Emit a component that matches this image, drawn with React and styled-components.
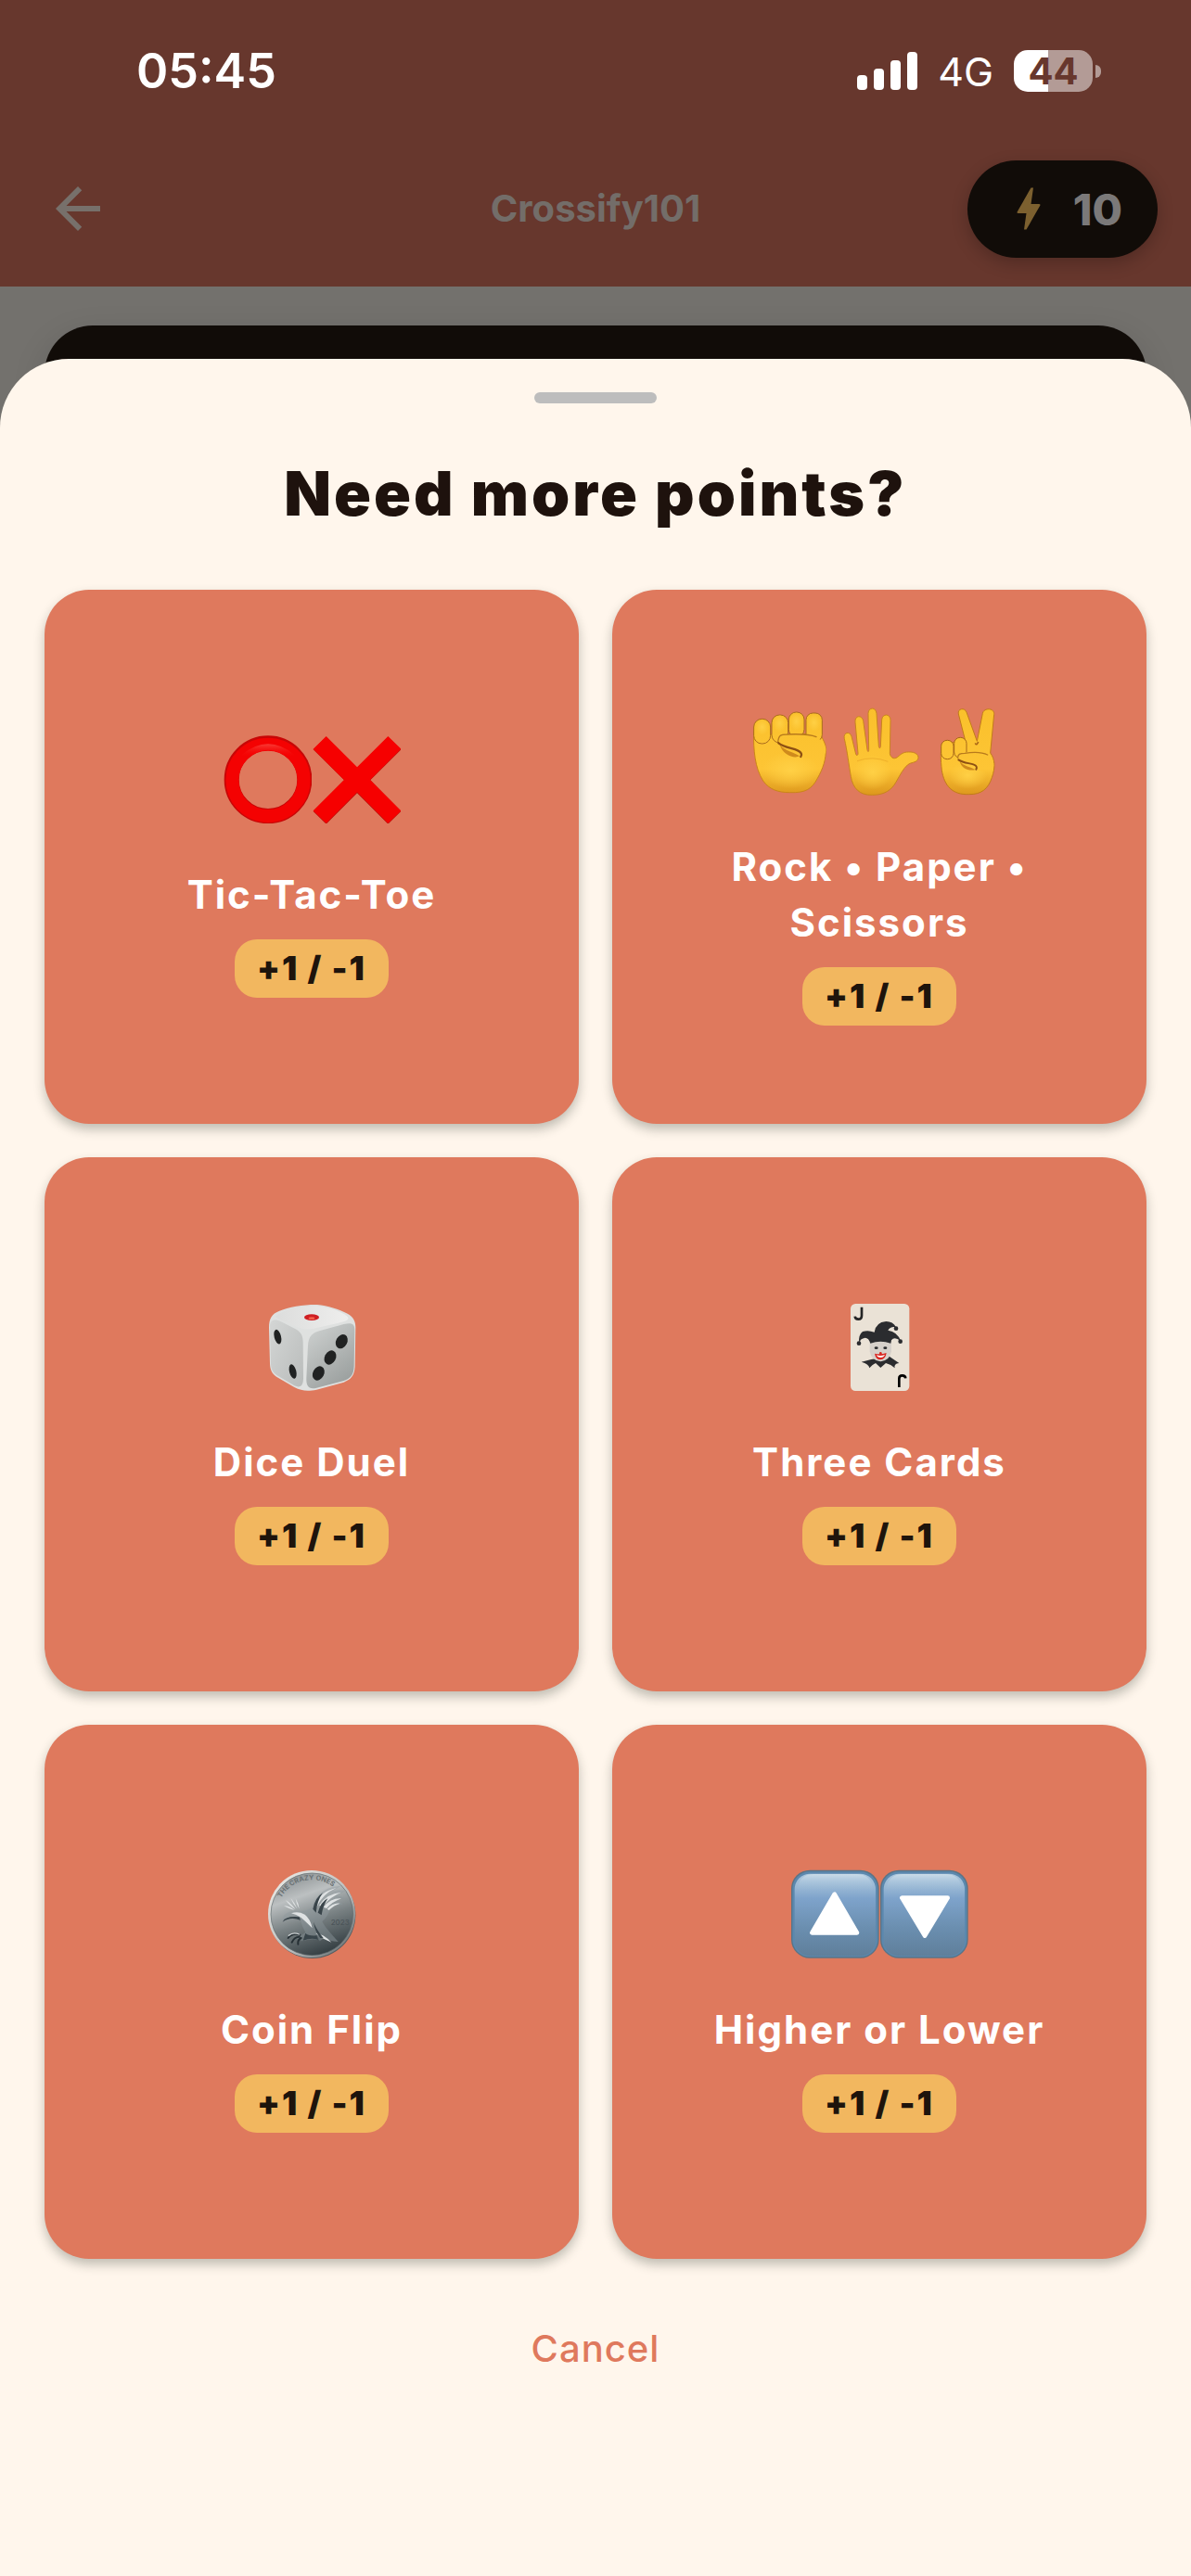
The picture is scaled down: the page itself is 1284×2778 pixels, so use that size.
import React from "react";
import styled, { createGlobalStyle } from "styled-components";
import { MdArrowBack, MdBolt } from "react-icons/md";

const GlobalStyle = createGlobalStyle`
  *, *::before, *::after { box-sizing: border-box; }
  body {
    margin: 0;
    background: #73716d;
    font-family: Inter, Roboto, "Liberation Sans", sans-serif;
    -webkit-font-smoothing: antialiased;
  }
  button { font-family: inherit; border: 0; padding: 0; margin: 0; cursor: pointer; }
`;

const Screen = styled.div`
  min-height: 100vh;
  display: flex;
  flex-direction: column;
  background: #73716d;
`;

const Header = styled.header`
  background: #67372d;
`;

const StatusBar = styled.div`
  height: 141px;
  padding: 12px 97px 0 147px;
  display: flex;
  align-items: center;
  justify-content: space-between;
  color: #ffffff;
`;

const Clock = styled.time`
  font-size: 52px;
  line-height: 60px;
  font-weight: 600;
`;

const StatusIcons = styled.div`
  display: flex;
  align-items: center;
  gap: 22px;
`;

const Network = styled.span`
  font-size: 43px;
  line-height: 48px;
  font-weight: 400;
`;

const Battery = styled.div`
  display: flex;
  align-items: center;
  gap: 3px;
`;

const BatteryBody = styled.span`
  width: 85px;
  height: 45px;
  border-radius: 15px;
  display: grid;
  place-items: center;
  background: linear-gradient(90deg, #ffffff 44%, #b39b96 44%);
  color: #67372d;
  font-size: 40px;
  line-height: 45px;
  font-weight: 700;
`;

const BatteryTip = styled.span`
  width: 6px;
  height: 14px;
  border-radius: 0 6px 6px 0;
  background: #b39b96;
`;

const AppBar = styled.div`
  height: 168px;
  padding: 0 36px;
  display: grid;
  grid-template-columns: 1fr auto 1fr;
  align-items: center;
`;

const BackButton = styled.button`
  width: 84px;
  height: 72px;
  padding-left: 12px;
  background: none;
  color: #77706b;
  svg { display: block; width: 72px; height: 72px; }
`;

const AppTitle = styled.h1`
  margin: 0;
  font-size: 40px;
  line-height: 48px;
  font-weight: 700;
  color: #736d69;
`;

const Points = styled.button`
  justify-self: end;
  height: 105px;
  padding: 0 38px 0 36px;
  border-radius: 53px;
  display: flex;
  align-items: center;
  gap: 18px;
  background: #110c08;
  color: #7b7979;
  font-size: 47px;
  font-weight: 800;
  box-shadow: 0 6px 18px rgba(0, 0, 0, 0.22);
  svg { width: 60px; height: 60px; color: #7c602f; }
`;

const Backdrop = styled.div`
  padding: 42px 48px 0;
`;

const HiddenCard = styled.div`
  height: 96px;
  border-radius: 52px 52px 0 0;
  background: #110c08;
  box-shadow: 0 12px 36px rgba(0, 0, 0, 0.14);
`;

const Sheet = styled.main`
  position: relative;
  flex: 1;
  margin-top: -60px;
  padding: 36px 48px 174px;
  border-radius: 74px 74px 0 0;
  background: #fff6ec;
  display: flex;
  flex-direction: column;
  align-items: center;
`;

const Handle = styled.span`
  width: 132px;
  height: 12px;
  border-radius: 6px;
  background: #bdbdbd;
`;

const Heading = styled.h2`
  margin: 57px 0 64px;
  font-size: 66px;
  line-height: 80px;
  font-weight: 900;
  letter-spacing: 3px;
  color: #1e120d;
`;

const Grid = styled.div`
  width: 100%;
  display: grid;
  grid-template-columns: repeat(2, minmax(0, 1fr));
  gap: 36px;
`;

const Tile = styled.button`
  aspect-ratio: 1;
  padding: 0 48px;
  border-radius: 48px;
  display: flex;
  flex-direction: column;
  align-items: center;
  justify-content: center;
  background: #df795d;
  box-shadow: 0 6px 12px rgba(30, 40, 30, 0.28);
`;

const Emojis = styled.span`
  height: 134px;
  margin-bottom: 28px;
  display: flex;
  align-items: center;
  svg { display: block; width: 96px; height: 96px; }
`;

const TileName = styled.span`
  font-size: 42px;
  line-height: 60px;
  font-weight: 700;
  letter-spacing: 2px;
  text-align: center;
  color: #ffffff;
`;

const Stake = styled.span`
  height: 63px;
  margin-top: 18px;
  padding: 0 24px;
  border-radius: 24px;
  background: #f2b75f;
  color: #1e140c;
  font-size: 36px;
  line-height: 63px;
  font-weight: 900;
  letter-spacing: 2px;
`;

const Cancel = styled.button`
  height: 144px;
  margin-top: 24px;
  padding: 0 48px;
  background: none;
  color: #df795d;
  font-size: 40px;
  font-weight: 500;
  letter-spacing: 1px;
`;

function Signal() {
  return (
    <svg width="65" height="41" viewBox="0 0 65 41" fill="#fff" aria-hidden="true">
      <rect x="0" y="25" width="11" height="16" rx="4" />
      <rect x="18" y="18" width="11" height="23" rx="4" />
      <rect x="36" y="9" width="11" height="32" rx="4" />
      <rect x="54" y="0" width="11" height="41" rx="4" />
    </svg>
  );
}

function Circle() {
  return (
    <svg viewBox="0 0 288 288" aria-hidden="true">
      <defs>
        <linearGradient id="ringShine" x1="0" y1="0" x2="0" y2="1">
          <stop offset="0" stopColor="#f83a34" />
          <stop offset="1" stopColor="#f50000" stopOpacity="0" />
        </linearGradient>
      </defs>
      <circle cx="147" cy="146" r="118" fill="none" stroke="#c80606" strokeWidth="48" />
      <circle cx="147" cy="148" r="116" fill="none" stroke="#f40202" strokeWidth="42" />
      <path d="M62 66 Q147 -4 232 66 Q220 80 206 70 Q147 30 88 70 Q72 80 62 66Z" fill="url(#ringShine)" />
    </svg>
  );
}

function Cross() {
  return (
    <svg viewBox="0 0 288 288" aria-hidden="true">
      <path d="M47 8 147 108 247 8 289 49 190 148 289 249 247 290 147 190 47 290 5 249 105 148 5 49Z" fill="#b8100a" />
      <path d="M47 6 147 106 247 6 289 47 189 147 289 247 247 287 147 187 47 287 5 247 105 147 5 47Z" fill="#f60000" />
    </svg>
  );
}

function SkinDefs({ id }) {
  return (
    <defs>
      <linearGradient id={id} gradientUnits="userSpaceOnUse" x1="0" y1="0" x2="0" y2="288">
        <stop offset="0" stopColor="#fac02b" />
        <stop offset="0.7" stopColor="#fdc535" />
        <stop offset="1" stopColor="#dc961c" />
      </linearGradient>
      <radialGradient id={`${id}Glow`}>
        <stop offset="0" stopColor="#ffd045" />
        <stop offset="1" stopColor="#ffd045" stopOpacity="0" />
      </radialGradient>
    </defs>
  );
}

function Fist() {
  return (
    <svg viewBox="0 0 288 288" aria-hidden="true">
      <SkinDefs id="fistSkin" />
      <path
        d="M26 80 C24 140 30 200 56 240 C76 268 104 278 142 278 C194 280 214 266 232 232 C250 200 260 170 259 136 C258 118 250 108 246 98 L230 88 L80 90Z"
        fill="url(#fistSkin)" stroke="#cb8518" strokeWidth="3"
      />
      <ellipse cx="145" cy="205" rx="90" ry="60" fill="url(#fistSkinGlow)" />
      <g fill="url(#fistSkin)" stroke="#a96b1c" strokeWidth="3">
        <rect x="139" y="18" width="50" height="80" rx="24" />
        <rect x="195" y="21" width="52" height="92" rx="22" />
        <rect x="84" y="27" width="53" height="90" rx="25" />
        <rect x="26" y="40" width="54" height="80" rx="26" />
      </g>
      <g fill="url(#fistSkinGlow)">
        <ellipse cx="53" cy="66" rx="22" ry="26" />
        <ellipse cx="110" cy="54" rx="22" ry="28" />
        <ellipse cx="164" cy="48" rx="22" ry="28" />
        <ellipse cx="221" cy="52" rx="22" ry="28" />
      </g>
      <path
        d="M118 90 C160 88 196 88 224 98 C250 108 260 126 259 142 C258 174 206 178 178 156 C180 144 168 138 146 134 C118 128 104 118 104 106 C104 96 108 90 118 90Z"
        fill="url(#fistSkin)"
      />
      <path d="M104 116 C106 94 112 90 132 90 C176 88 204 88 228 98" fill="none" stroke="#b87a1c" strokeWidth="4" strokeLinecap="round" />
      <path d="M110 124 C130 146 152 146 174 160 C158 170 120 158 110 124Z" fill="#cf8a1c" />
      <path d="M106 118 C124 132 150 134 168 142 C180 148 183 154 178 162" fill="none" stroke="#8d5013" strokeWidth="7" strokeLinecap="round" />
    </svg>
  );
}

const palmShape =
  "M31 104 C26 84 48 78 54 96 L68 154 C70 160 76 158 75 150 L66 50 C64 28 88 26 92 46 L105 140 C107 148 110 147 110 139 L108 22 C109 1 133 1 135 22 L142 128 C143 136 147 136 148 129 L152 42 C154 22 180 22 180 44 L178 152 C180 164 190 172 202 164 C216 152 222 147 238 147 C260 145 276 158 268 172 C262 182 246 180 236 188 C220 202 212 220 198 244 C184 270 160 286 122 286 C78 288 58 262 52 226 C46 192 40 142 31 104Z";

function Palm() {
  return (
    <svg viewBox="0 0 288 288" aria-hidden="true">
      <SkinDefs id="palmSkin" />
      <path d={palmShape} fill="url(#palmSkin)" stroke="#c9861b" strokeWidth="3" />
      <ellipse cx="122" cy="212" rx="62" ry="56" fill="url(#palmSkinGlow)" />
      <path d="M72 176 Q122 158 172 178" fill="none" stroke="#efb02a" strokeWidth="3" />
    </svg>
  );
}

function Peace() {
  return (
    <svg viewBox="0 0 288 288" aria-hidden="true">
      <SkinDefs id="peaceSkin" />
      <path
        d="M112 24 C108 6 132 2 138 18 L172 112 L190 22 C194 2 230 4 227 26 L215 150 C230 170 232 196 220 230 C208 266 186 285 145 284 C92 286 66 256 58 206 C54 170 54 150 58 122 L134 110Z"
        fill="url(#peaceSkin)" stroke="#c27c18" strokeWidth="3"
      />
      <ellipse cx="142" cy="222" rx="62" ry="44" fill="url(#peaceSkinGlow)" />
      <path d="M166 118 Q171 128 176 114" fill="none" stroke="#a96617" strokeWidth="5" />
      <g fill="url(#peaceSkin)" stroke="#a66618" strokeWidth="3">
        <rect x="98" y="100" width="40" height="66" rx="19" />
        <rect x="56" y="109" width="40" height="61" rx="19" />
      </g>
      <path
        d="M116 150 C146 146 180 144 202 154 C220 164 226 176 226 192 C218 214 184 212 168 202 C170 190 162 186 146 184 C126 182 110 176 110 164 C110 156 112 152 116 150Z"
        fill="url(#peaceSkin)"
      />
      <path d="M110 166 C110 154 116 151 132 151 C164 146 190 148 206 156" fill="none" stroke="#b87a1c" strokeWidth="4" strokeLinecap="round" />
      <path d="M116 176 C130 194 146 192 166 204 C148 210 120 200 116 176Z" fill="#cf8a1c" />
      <path d="M112 172 C130 184 148 182 162 188 C172 192 172 198 169 203" fill="none" stroke="#8d5013" strokeWidth="6" strokeLinecap="round" />
    </svg>
  );
}

function Die() {
  return (
    <svg viewBox="0 0 288 288" aria-hidden="true">
      <defs>
        <linearGradient id="dieLeft" x1="0" y1="0" x2="1" y2="1">
          <stop offset="0" stopColor="#d4d6d5" />
          <stop offset="1" stopColor="#b9bcbb" />
        </linearGradient>
        <linearGradient id="dieRight" x1="0.2" y1="0" x2="0.8" y2="1">
          <stop offset="0" stopColor="#cccfce" />
          <stop offset="1" stopColor="#989d9c" />
        </linearGradient>
        <linearGradient id="dieTop" x1="0" y1="0" x2="1" y2="0">
          <stop offset="0" stopColor="#dcdddc" />
          <stop offset="1" stopColor="#eeeeed" />
        </linearGradient>
      </defs>
      <path
        d="M38 30 C70 16 124 8 162 9 C196 12 232 24 260 38 C278 48 286 62 286 82 L284 210 C282 238 272 250 248 260 L160 284 C130 290 112 288 88 276 L30 242 C14 230 10 218 9 200 L6 84 C6 54 16 38 38 30Z"
        fill="#dfe1e0"
      />
      <path d="M9 78 C10 58 22 54 42 62 L92 88 C110 98 116 110 116 132 L117 240 C118 272 108 280 88 271 L32 238 C18 229 13 218 12 202Z" fill="url(#dieLeft)" />
      <path d="M132 140 C134 112 146 98 174 92 L248 72 C276 66 284 72 283 94 L281 208 C280 236 270 248 246 256 L160 278 C134 284 126 272 127 246Z" fill="url(#dieRight)" />
      <path d="M28 46 C60 22 124 12 160 13 C196 16 238 30 258 46 C272 60 248 64 224 70 L160 84 C132 92 112 88 90 78 L38 56 Q24 50 28 46Z" fill="url(#dieTop)" />
      <ellipse cx="144" cy="50" rx="24" ry="10" fill="#cf1e22" />
      <ellipse cx="144" cy="53" rx="10" ry="4" fill="#f2604a" />
      <g fill="#202222">
        <ellipse cx="34" cy="113" rx="11" ry="24" transform="rotate(-14 34 113)" />
        <ellipse cx="83" cy="225" rx="11" ry="24" transform="rotate(-14 83 225)" />
        <ellipse cx="241" cy="128" rx="18" ry="24" transform="rotate(28 241 128)" />
        <ellipse cx="204" cy="180" rx="18" ry="24" transform="rotate(28 204 180)" />
        <ellipse cx="166" cy="231" rx="18" ry="24" transform="rotate(28 166 231)" />
      </g>
    </svg>
  );
}

function Joker() {
  return (
    <svg viewBox="0 0 288 288" aria-hidden="true">
      <rect x="51" y="6" width="190" height="282" rx="16" fill="#eae2d6" />
      <g fill="none" stroke="#252526" strokeWidth="8">
        <path d="M87 17 V44 Q87 56 76 56 Q66 56 65 47" />
        <path d="M208 276 V248 Q208 238 218 238 Q228 238 229 247" stroke="#000" />
      </g>
      <path d="M118 186 L86 194 Q110 200 112 214 Q122 202 132 198 L148 213 L165 198 Q182 202 194 214 Q190 200 208 198 L176 176Z" fill="#2b2c2f" />
      <path d="M113 118 H182 L183 160 Q178 190 148 193 Q118 190 113 160Z" fill="#d6d0ca" />
      <path
        d="M78 134 Q76 106 90 96 Q108 90 128 98 Q132 66 166 63 Q188 63 198 82 Q180 78 172 92 Q202 96 213 126 Q192 110 183 124 L181 134 Q148 122 115 134 Q110 116 98 116 Q82 118 78 134Z"
        fill="#2b2c2f"
      />
      <g fill="#2b2c2f">
        <circle cx="78" cy="134" r="7" />
        <circle cx="198" cy="86" r="7" />
        <circle cx="212" cy="128" r="7" />
        <ellipse cx="134" cy="149" rx="6" ry="4" />
        <ellipse cx="163" cy="149" rx="6" ry="4" />
      </g>
      <path d="M129 167 Q148 172 167 165 Q164 186 148 187 Q132 186 129 167Z" fill="#d9241f" />
      <path d="M135 172 Q148 177 162 171 Q158 180 148 180 Q138 180 135 172Z" fill="#fff" />
      <circle cx="148" cy="166" r="4" fill="#d9241f" />
    </svg>
  );
}

function Coin() {
  return (
    <svg viewBox="0 0 288 288" aria-hidden="true">
      <defs>
        <linearGradient id="coinFace" x1="0.2" y1="0" x2="0.55" y2="1">
          <stop offset="0" stopColor="#858b8d" />
          <stop offset="0.3" stopColor="#bcc0c1" />
          <stop offset="0.6" stopColor="#7a8284" />
          <stop offset="1" stopColor="#364044" />
        </linearGradient>
        <linearGradient id="coinRim" x1="0" y1="0" x2="1" y2="1">
          <stop offset="0" stopColor="#f1efea" />
          <stop offset="0.6" stopColor="#b9bcbc" />
          <stop offset="1" stopColor="#545c5f" />
        </linearGradient>
        <linearGradient id="eagle" x1="0" y1="0" x2="0.4" y2="1">
          <stop offset="0" stopColor="#c9cdcf" />
          <stop offset="0.5" stopColor="#929a9d" />
          <stop offset="1" stopColor="#6a7478" />
        </linearGradient>
        <path id="coinArc" d="M45 92 A114 114 0 0 1 238 82" />
      </defs>
      <circle cx="146" cy="148" r="140" fill="#555e61" />
      <circle cx="144" cy="144" r="141" fill="url(#coinRim)" />
      <circle cx="145" cy="145" r="133" fill="url(#coinFace)" stroke="#5e686b" strokeWidth="2" />
      <text fontSize="22" fontWeight="700" fill="#6a7274">
        <textPath href="#coinArc">THE CRAZY ONES</textPath>
      </text>
      <path
        d="M50 168 Q50 144 70 138 Q84 130 106 134 Q130 136 144 122 Q158 78 196 62 Q216 52 238 54 Q224 62 214 70 Q236 64 254 70 Q238 80 222 84 Q242 84 252 96 Q232 96 220 99 Q240 104 244 114 Q218 112 204 124 Q200 150 178 168 Q182 182 230 234 Q200 232 184 222 L170 232 L158 206 Q160 220 168 228 Q146 222 112 232 L98 222 L124 204 Q112 184 108 162 Q78 150 50 168Z"
        fill="url(#eagle)"
      />
      <g fill="#dfe2e3">
        <path d="M152 118 Q170 72 224 60 Q180 78 160 122Z" />
        <path d="M168 116 Q192 78 240 74 Q204 88 180 120Z" />
        <path d="M182 122 Q206 92 240 94 Q212 104 192 126Z" />
        <path d="M194 128 Q214 106 236 110 Q216 116 200 132Z" />
        <path d="M54 118 Q74 118 88 132 Q72 128 54 118Z" />
        <path d="M60 100 Q78 110 92 130 Q74 120 60 100Z" />
        <path d="M76 92 Q90 108 98 128 Q84 114 76 92Z" />
        <path d="M92 94 Q102 110 104 128 Q94 114 92 94Z" />
        <path d="M78 142 Q100 134 122 146 Q140 160 146 190 Q124 168 110 156 Q94 146 78 142Z" />
        <path d="M156 206 Q182 208 208 236 Q182 226 156 206Z" />
      </g>
      <g fill="#39444a">
        <path d="M50 170 Q58 150 104 154 L108 164 Q74 152 50 170Z" />
        <path d="M148 128 Q156 90 180 76 Q162 100 158 140Z" />
        <path d="M164 140 Q174 104 196 94 Q180 118 176 148Z" />
        <path d="M124 206 Q132 216 160 214 L166 228 Q144 220 116 230Z" />
        <path d="M150 170 Q160 196 182 222 L172 222 Q154 200 150 170Z" />
      </g>
      <g fill="none" stroke="#263035" strokeWidth="6" strokeLinecap="round">
        <path d="M106 212 Q82 204 68 222 M104 218 Q88 218 80 236 M110 222 Q98 228 100 242" />
      </g>
      <path d="M104 210 Q84 202 70 214" fill="none" stroke="#cfd3d5" strokeWidth="4" strokeLinecap="round" />
      <text x="206" y="180" fontSize="24" fontWeight="500" fill="#4c5559">2023</text>
    </svg>
  );
}

function ArrowKey({ down }) {
  const id = down ? "keyDown" : "keyUp";
  return (
    <svg viewBox="0 0 288 288" aria-hidden="true">
      <defs>
        <linearGradient id={id} x1="0" y1="0" x2="0" y2="1">
          <stop offset="0" stopColor="#a9c5dc" />
          <stop offset="0.14" stopColor="#9dbbd6" />
          <stop offset="0.3" stopColor="#7ea3cb" />
          <stop offset="0.65" stopColor="#6b8fb0" />
          <stop offset="1" stopColor="#5f7f9b" />
        </linearGradient>
        <linearGradient id={`${id}Shine`} x1="0" y1="0" x2="0" y2="1">
          <stop offset="0" stopColor="#cadce8" />
          <stop offset="1" stopColor="#8db0d2" stopOpacity="0" />
        </linearGradient>
      </defs>
      <rect x="3" y="2" width="284" height="285" rx="60" fill="#5b7486" />
      <rect x="7" y="7" width="276" height="276" rx="56" fill="#5b88ae" />
      <rect x="14" y="14" width="262" height="266" rx="50" fill={`url(#${id})`} />
      <path d="M22 76 Q22 15 78 15 H212 Q268 15 268 76Z" fill={`url(#${id}Shine)`} />
      <path
        d={down ? "M73 92 H221 L147 215Z" : "M70 205 H216 L143 80Z"}
        fill="#fff" stroke="#fff" strokeWidth="14" strokeLinejoin="round"
      />
    </svg>
  );
}

const games = [
  { name: "Tic-Tac-Toe", art: <><Circle /><Cross /></> },
  { name: "Rock • Paper • Scissors", art: <><Fist /><Palm /><Peace /></> },
  { name: "Dice Duel", art: <Die /> },
  { name: "Three Cards", art: <Joker /> },
  { name: "Coin Flip", art: <Coin /> },
  { name: "Higher or Lower", art: <><ArrowKey /><ArrowKey down /></> },
];

export default function App() {
  return (
    <Screen>
      <GlobalStyle />
      <Header>
        <StatusBar>
          <Clock>05:45</Clock>
          <StatusIcons>
            <Signal />
            <Network>4G</Network>
            <Battery>
              <BatteryBody>44</BatteryBody>
              <BatteryTip />
            </Battery>
          </StatusIcons>
        </StatusBar>
        <AppBar>
          <BackButton aria-label="Back"><MdArrowBack /></BackButton>
          <AppTitle>Crossify101</AppTitle>
          <Points><MdBolt />10</Points>
        </AppBar>
      </Header>
      <Backdrop>
        <HiddenCard />
      </Backdrop>
      <Sheet>
        <Handle />
        <Heading>Need more points?</Heading>
        <Grid>
          {games.map((game) => (
            <Tile key={game.name}>
              <Emojis>{game.art}</Emojis>
              <TileName>{game.name}</TileName>
              <Stake>+1 / -1</Stake>
            </Tile>
          ))}
        </Grid>
        <Cancel>Cancel</Cancel>
      </Sheet>
    </Screen>
  );
}
